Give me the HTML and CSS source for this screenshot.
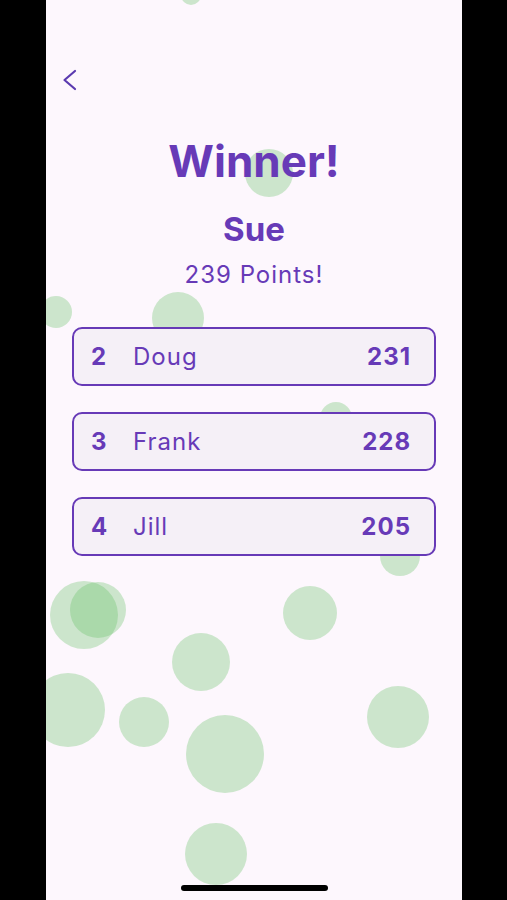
FILE: index.html
```html
<!DOCTYPE html>
<html>
<head>
<meta charset="utf-8">
<link rel="stylesheet" href="styles.css">
</head>
<body>
<div class="phone">
  <div class="confetti">
    <span class="dot d1"></span><span class="dot d2"></span><span class="dot d3"></span>
    <span class="dot d4"></span><span class="dot d5"></span><span class="dot d6"></span>
    <span class="dot d7"></span><span class="dot d8"></span><span class="dot d9"></span>
    <span class="dot d10"></span><span class="dot d11"></span><span class="dot d12"></span>
    <span class="dot d13"></span><span class="dot d14"></span><span class="dot d15"></span>
  </div>
  <div class="content">
    <div class="topbar">
      <svg class="back" width="16" height="22" viewBox="0 0 16 22"><path d="M13 2 L2.5 11 L13 20" fill="none" stroke="#5b3ab0" stroke-width="2.2" stroke-linecap="round" stroke-linejoin="round"/></svg>
    </div>
    <h1 class="title">Winner!</h1>
    <h2 class="winner">Sue</h2>
    <p class="points">239 Points!</p>
    <div class="list">
      <div class="card"><span class="rank">2</span><span class="name">Doug</span><span class="score">231</span></div>
      <div class="card"><span class="rank">3</span><span class="name">Frank</span><span class="score">228</span></div>
      <div class="card"><span class="rank">4</span><span class="name">Jill</span><span class="score">205</span></div>
    </div>
  </div>
  <div class="home-indicator"></div>
</div>
</body>
</html>
```

FILE: styles.css
```css
html, body {
  margin: 0;
  padding: 0;
  background: #000;
}
body {
  width: 507px;
  height: 900px;
  overflow: hidden;
  font-family: Inter, "Noto Sans", sans-serif;
}
.phone {
  position: relative;
  width: 416px;
  height: 900px;
  margin-left: 46px;
  background: #fdf7fd;
  overflow: hidden;
}
.confetti {
  position: absolute;
  inset: 0;
}
.dot {
  position: absolute;
  border-radius: 50%;
  background: rgba(93, 188, 93, 0.3);
}
.d1 { left: 135px; top: -15px; width: 20px; height: 20px; }
.d2 { left: 199px; top: 149px; width: 48px; height: 48px; }
.d3 { left: -6px; top: 296px; width: 32px; height: 32px; }
.d4 { left: 106px; top: 292px; width: 52px; height: 52px; }
.d5 { left: 274px; top: 402px; width: 32px; height: 32px; }
.d6 { left: 334px; top: 536px; width: 40px; height: 40px; }
.d7 { left: 237px; top: 586px; width: 54px; height: 54px; }
.d8 { left: 4px; top: 581px; width: 68px; height: 68px; }
.d9 { left: 24px; top: 582px; width: 56px; height: 56px; }
.d10 { left: 126px; top: 633px; width: 58px; height: 58px; }
.d11 { left: -15px; top: 673px; width: 74px; height: 74px; }
.d12 { left: 73px; top: 697px; width: 50px; height: 50px; }
.d13 { left: 140px; top: 715px; width: 78px; height: 78px; }
.d14 { left: 321px; top: 686px; width: 62px; height: 62px; }
.d15 { left: 139px; top: 823px; width: 62px; height: 62px; }

.content {
  position: relative;
  display: flex;
  flex-direction: column;
  align-items: center;
}
.topbar {
  align-self: stretch;
  height: 139px;
  display: flex;
  align-items: flex-start;
}
.back {
  margin-top: 69px;
  margin-left: 16px;
}
.title {
  margin: 0;
  font-size: 44px;
  line-height: 44px;
  font-weight: 700;
  color: #673ab7;
}
.winner {
  margin: 30px 0 0;
  font-size: 33px;
  line-height: 33px;
  font-weight: 700;
  color: #673ab7;
}
.points {
  margin: 17px 0 0;
  font-size: 24px;
  line-height: 24px;
  font-weight: 400;
  letter-spacing: 1px;
  color: #673ab7;
}
.list {
  align-self: stretch;
  margin: 40px 26px 0;
  display: flex;
  flex-direction: column;
  gap: 26px;
}
.card {
  height: 55px;
  display: flex;
  align-items: center;
  padding: 0 23px 0 17px;
  border: 2px solid #673ab7;
  border-radius: 10px;
  background: #f5f0f7;
  color: #673ab7;
  font-size: 24px;
  letter-spacing: 1px;
}
.rank {
  width: 42px;
  font-weight: 700;
}
.name {
  flex: 1;
  font-weight: 400;
}
.score {
  font-weight: 700;
}
.home-indicator {
  position: absolute;
  left: 135px;
  top: 885px;
  width: 147px;
  height: 6px;
  border-radius: 3px;
  background: #000;
}
```
